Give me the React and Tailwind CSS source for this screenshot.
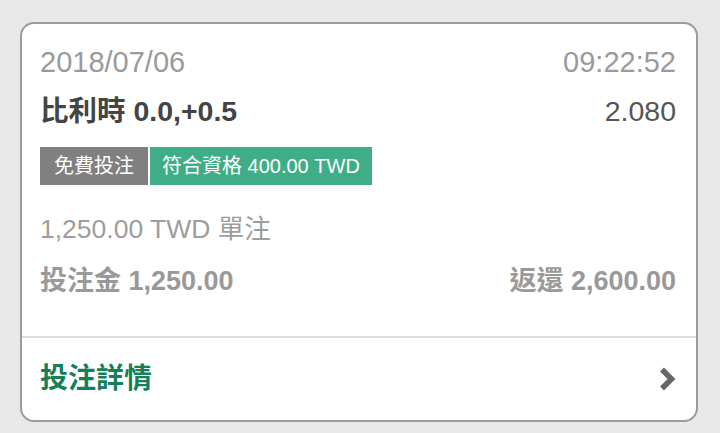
export default function App() {
  const font = {
    fontFamily: '"Liberation Sans", Arial, "Noto Sans CJK TC", sans-serif',
  };

  return (
    <div
      className="w-[720px] h-[433px] bg-[#e8e8e8] pt-[22px] pl-[20px] pr-[22px]"
      style={font}
    >
      {/* Bet card */}
      <div className="w-[678px] h-[400px] bg-white border-2 border-[#9b9b9b] rounded-[14px] overflow-hidden flex flex-col">
        <div className="pl-[18px] pr-[20px] pt-[20px] h-[312px] shrink-0">
          <div className="flex justify-between items-center h-[36px] leading-[36px] text-[29px] text-[#9a9a9a]">
            <span>2018/07/06</span>
            <span>09:22:52</span>
          </div>

          <div className="mt-[13px] flex justify-between items-center h-[36px] leading-[36px] text-[28.5px] text-[#444]">
            <span className="font-bold">比利時 0.0,+0.5</span>
            <span className="text-[#555]">2.080</span>
          </div>

          <div className="mt-[18px] flex gap-[2px] h-[38px] text-[20px] leading-[38px] text-white">
            <span className="bg-[#808080] px-[14px]">免費投注</span>
            <span className="bg-[#3fae87] px-[12px]">符合資格 400.00 TWD</span>
          </div>

          <div className="mt-[27px] h-[34px] leading-[34px] text-[26.5px] text-[#9d9d9d]">
            1,250.00 TWD 單注
          </div>

          <div className="mt-[18px] flex justify-between items-center h-[34px] leading-[34px] text-[27px] text-[#999] font-bold">
            <span>投注金 1,250.00</span>
            <span>返還 2,600.00</span>
          </div>
        </div>

        <div className="h-[2px] bg-[#dcdcdc] shrink-0"></div>

        <div className="flex-1 flex items-center justify-between pl-[18px] pr-[20px]">
          <span className="text-[28px] font-bold text-[#157f58] leading-[36px]">
            投注詳情
          </span>
          <svg width="18" height="26" viewBox="0 0 18 26">
            <path
              d="M4 3.5 L13.5 13 L4 22.5"
              fill="none"
              stroke="#666"
              strokeWidth="5.5"
              strokeLinejoin="miter"
            />
          </svg>
        </div>
      </div>
    </div>
  );
}
